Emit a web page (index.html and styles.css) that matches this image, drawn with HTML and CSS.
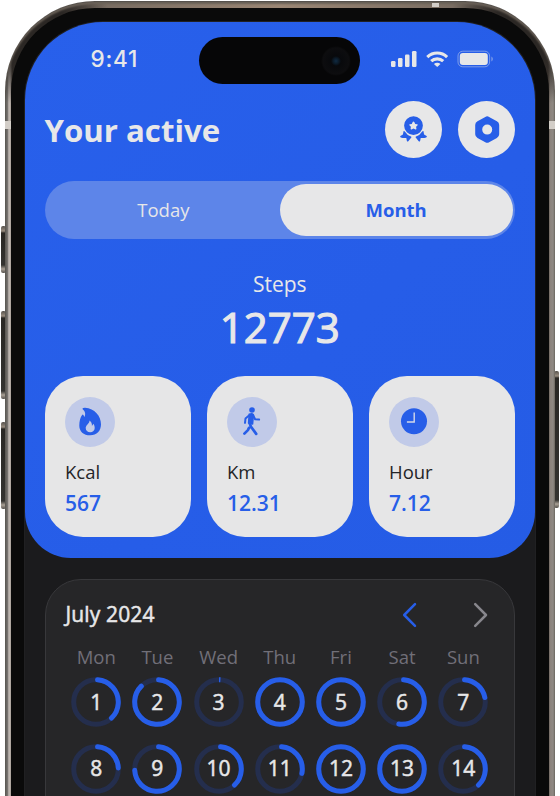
FILE: index.html
```html
<!DOCTYPE html>
<html lang="en">
<head>
<meta charset="utf-8">
<title>Your active</title>
<link rel="stylesheet" href="styles.css">
</head>
<body>
<div class="device">
  <span class="side-button side-action"></span>
  <span class="side-button side-up"></span>
  <span class="side-button side-down"></span>
  <span class="side-button side-power"></span>
  <div class="frame">
    <span class="band band-left"></span><span class="band band-right"></span><span class="band band-top"></span>
    <div class="bezel">
      <div class="screen">
        <div class="island"><span class="camera"></span></div>
        <main class="hero">
          <div class="status">
            <span class="clock">9:41</span>
            <svg class="status-icons" width="104" height="20" viewBox="0 0 104 20">
              <g fill="#e7e7e8">
                <rect x="1" y="12" width="4.5" height="6" rx="1.2"/><rect x="8" y="9" width="4.5" height="9" rx="1.2"/><rect x="15" y="5.5" width="4.5" height="12.5" rx="1.2"/><rect x="22" y="2" width="4.5" height="16" rx="1.2"/>
                <path d="M47.2 18.1l-3.3-3.2c1.8-1.6 4.8-1.6 6.6 0z"/>
                <rect x="69.8" y="4" width="28" height="12" rx="3"/>
                <path d="M101.4 7.5c1.9.8 1.9 4.2 0 5z" opacity=".45"/>
              </g>
              <path d="M37.3 8.1c5.5-5.4 14.3-5.4 19.8 0M41.2 12.2c3.3-3.1 8.7-3.1 12 0" fill="none" stroke="#e7e7e8" stroke-width="3.1"/>
              <rect x="68" y="2.2" width="31.6" height="15.6" rx="4.8" fill="none" stroke="#e7e7e8" opacity=".45"/>
            </svg>
          </div>
          <header class="title-row">
            <h1>Your active</h1>
            <button class="round-button" aria-label="Awards">
              <svg width="58" height="58" viewBox="0 0 58 58" fill="#275ee8">
                <path fill-rule="evenodd" d="M28.5 15.2a9.4 9.4 0 1 1 0 18.8a9.4 9.4 0 1 1 0-18.8zM28.5 20.6q-.6 0-.8.5l-.9 1.8-2 .3q-1 .3-.4 1.1l1.5 1.5-.3 2q0 1 .9.7l2-1 2 1q.9.3.9-.7l-.3-2 1.5-1.5q.6-.8-.4-1.1l-2-.3-.9-1.8q-.2-.5-.8-.5z"/>
                <path d="M18.6 30q.8-.3 1.2.5 2.4 3.9 6.2 4.9.8.4.3 1.2l-3 3.6q-.9.7-1.4-.3l-.6-2.8-3.7-.1-1.8-.6q-1.2-.5-.4-1.4l2.5-1.6zM38.4 30q-.8-.3-1.2.5-2.4 3.9-6.2 4.9-.8.4-.3 1.2l3 3.6q.9.7 1.4-.3l.6-2.8 3.7-.1 1.8-.6q1.2-.5.4-1.4l-2.5-1.6z"/>
              </svg>
            </button>
            <button class="round-button" aria-label="Settings">
              <svg width="58" height="58" viewBox="0 0 58 58" fill="#275ee8">
                <path fill-rule="evenodd" d="M27.3 15.9q1.9-1.1 3.8 0l7.8 4.3q2.3 1.3 2.3 3.7v9.4q0 2.4-2.3 3.7l-7.8 4.3q-1.9 1.1-3.8 0l-7.8-4.3q-2.3-1.3-2.3-3.7v-9.4q0-2.4 2.3-3.7zM29.2 23.6a5 5 0 1 0 0 10a5 5 0 1 0 0-10z"/>
              </svg>
            </button>
          </header>
          <div class="segments"><span class="segment">Today</span><span class="segment segment-active">Month</span></div>
          <section class="steps"><div class="steps-label">Steps</div><div class="steps-value">12773</div></section>
          <section class="cards">
            <article class="card">
              <svg class="card-icon" width="50" height="50" viewBox="0 0 50 50"><path fill="#275ee8" fill-rule="evenodd" d="M17.5 11.6q.5-1 2.6-.9C29.5 11.3 36 19 36 27.3c0 6.6-4.2 11-10.8 11-6.8 0-10.9-4-10.9-9.6 0-4.4 1-8.6 2.8-10.8q.8-.8 1.3.2l1.1 1.8c1.2-2.3.8-5-1-6.8q-1.2-.9-1-1.5zM24.4 23.4c.5 3-3.7 4.2-3.7 7.7 0 2.7 1.9 4.2 4.5 4.2s4.5-1.7 4.5-4.3c0-1.7-.6-3.2-1.5-4.2-.3 1-.7 1.7-1.3 1.9.3-2.1-.7-4.3-2.5-5.3z"/></svg>
              <div class="card-label">Kcal</div><div class="card-value">567</div>
            </article>
            <article class="card">
              <svg class="card-icon" width="50" height="50" viewBox="0 0 50 50" fill="none" stroke="#275ee8" stroke-linecap="round" stroke-linejoin="round"><circle cx="25" cy="13" r="2.8" fill="#275ee8" stroke="none"/><path d="M22.2 17.3q2.8-1.3 4.2.4L25.6 27l-4-1z" fill="#275ee8" stroke-width="1.5"/><path d="M22 18.5l-3.5 3-.5 4.3M26.3 18.5l1.8 3.8 4 .3" stroke-width="2"/><path d="M22.5 26l1.5 3.7 5.2 7.2M22 30.8l-1.1 2.3-3.5 3.5" stroke-width="2.7"/></svg>
              <div class="card-label">Km</div><div class="card-value">12.31</div>
            </article>
            <article class="card">
              <svg class="card-icon" width="50" height="50" viewBox="0 0 50 50"><circle cx="25" cy="24.3" r="13" fill="#275ee8"/><path d="M25.2 15.5V25h-7.3" fill="none" stroke="#d3d9e8" stroke-width="1.4"/></svg>
              <div class="card-label">Hour</div><div class="card-value">7.12</div>
            </article>
          </section>
        </main>
        <section class="calendar">
          <div class="calendar-head"><h2>July 2024</h2>
            <svg width="88" height="28" viewBox="0 0 88 28" fill="none" stroke-width="2.5" stroke-linecap="round" stroke-linejoin="round"><path d="M14 3.2L3.2 14 14 24.8" stroke="#275ee8"/><path d="M74.2 3.2L85 14 74.2 24.8" stroke="#88878d"/></svg>
          </div>
          <div class="weekdays"><span>Mon</span><span>Tue</span><span>Wed</span><span>Thu</span><span>Fri</span><span>Sat</span><span>Sun</span></div>
          <div class="days" id="days"></div>
        </section>
      </div>
    </div>
  </div>
</div>
<script src="calendar.js"></script>
</body>
</html>
```
FILE: styles.css
```css
* { box-sizing: border-box; }
body { margin: 0; width: 560px; height: 796px; overflow: hidden; background: #fff; font-family: "Open Sans", "Noto Sans", sans-serif; color: #e7e7e8; }
h1, h2 { margin: 0; }
.device { position: relative; height: 796px; padding: 1px 5px 0 4.5px; overflow: hidden; }
.frame { position: relative; height: 900px; padding: 7px 6px 0 6.5px; border-radius: 90px 90px 0 0; background: radial-gradient(circle at 25px 25px, #2b2724 35px, transparent 80px), radial-gradient(circle at 525px 25px, #2b2724 35px, transparent 80px), linear-gradient(90deg, #555351 0, #77736f 2.5px, #c6beb8 4px, #a79e97 6px, #332d28 7px, #776b61 90px, #9c8775 50%, #776b61 460px, #443b35 543px, #8b827b 545px, #8f8983 548px, #77736e 100%); box-shadow: inset 0 1px 1px #55504b, inset 0 3px 2px #6b6259; }
.band { position: absolute; background: #d3cec8; }
.band-left { left: 0; top: 120px; width: 6px; height: 8px; }
.band-right { right: 0; top: 120px; width: 6px; height: 8px; }
.band-top { left: 427px; top: 2px; width: 7px; height: 4px; }
.side-button { position: absolute; width: 5px; border-radius: 2px; background: linear-gradient(#55514c, #998d80 5px, #292724 7px, #343330 calc(100% - 8px), #aaa196 calc(100% - 4px), #55514c); }
.side-action { left: 1px; top: 226px; height: 47px; }
.side-up { left: 1px; top: 311px; height: 88px; }
.side-down { left: 1px; top: 422px; height: 87px; }
.side-power { right: 1px; top: 371px; height: 137px; }
.bezel { height: 100%; padding: 13.5px 14.5px 0 14px; border-radius: 84px 84px 0 0; background: #0a0a0a; }
.screen { position: relative; height: 100%; border-radius: 78px 78px 0 0; background: #1b1b1d; overflow: hidden; box-shadow: 0 0 0 1px #202022; }
.island { position: absolute; left: 174px; top: 15px; width: 161px; height: 47px; border-radius: 24px; background: #060607; }
.camera { position: absolute; right: 9px; top: 9px; width: 30px; height: 30px; border-radius: 50%; background: radial-gradient(circle, #102b43 0, #0b1926 3px, #08090c 5px, #0d0d0f 13px, #060607 15px); }
.hero { height: 536.5px; padding: 0 19.5px; border-radius: 0 0 46px 46px; background: linear-gradient(135deg, #2860eb, #265de8 60%, #255ce5); }
.status { display: flex; justify-content: space-between; align-items: center; height: 75px; padding: 0 21px 0 46px; }
.clock { font: 500 22.5px/28px Inter, sans-serif; letter-spacing: .8px; }
.title-row { display: flex; align-items: center; height: 66px; gap: 15.5px; }
.title-row h1 { flex: 1; font-size: 31.2px; line-height: 40px; font-weight: 700; padding-top: 1px; }
.round-button { flex: none; width: 57.5px; height: 57.5px; padding: 0; border: 0; border-radius: 50%; background: #e7e7e8; overflow: hidden; }
.round-button svg { display: block; }
.segments { display: flex; margin-top: 18.5px; height: 57.5px; padding: 2.5px; border-radius: 29px; background: #5d85e9; }
.segment { display: flex; flex: 1; align-items: center; justify-content: center; border-radius: 27px; font-size: 18.5px; padding-bottom: 1px; }
.segment-active { color: #275ee8; background: #e7e7e8; font-weight: 700; }
.steps { text-align: center; padding-top: 31.5px; height: 137.5px; }
.steps-label { font-size: 21px; line-height: 29px; }
.steps-value { font-size: 42px; line-height: 56px; font-weight: 400; -webkit-text-stroke: 1.2px currentColor; }
.cards { display: grid; grid-template-columns: repeat(3, 1fr); gap: 15.5px; }
.card { height: 161px; padding: 20.5px; border-radius: 38px; background: #e6e6e7; color: #242528; }
.card-icon { display: block; border-radius: 50%; background: #c1cae8; }
.card-label { margin-top: 12px; font-size: 18.5px; line-height: 26px; }
.card-value { margin-top: 4px; font-size: 21px; line-height: 29px; font-weight: 600; color: #275ee8; }
.calendar { margin: 21px 19.5px 0; height: 400px; padding: 18.5px 20px 0; border: 1px solid #38383b; border-radius: 36px 36px 0 0; background: #262628; }
.calendar-head { display: flex; justify-content: space-between; align-items: center; height: 32px; padding-right: 5px; }
.calendar-head h2 { font-size: 21px; font-weight: 400; letter-spacing: .15px; -webkit-text-stroke: .5px currentColor; padding-bottom: 1px; }
.weekdays, .days { display: grid; grid-template-columns: repeat(7, 61.2px); justify-content: center; justify-items: center; }
.weekdays { margin-top: 13px; line-height: 26px; font-size: 18.5px; color: #716f78; }
.days { margin-top: 7.5px; row-gap: 16.5px; }
.day { display: grid; place-items: center; width: 50px; height: 50px; font-size: 21px; line-height: 29px; font-weight: 400; -webkit-text-stroke: .5px currentColor; }
.day svg, .day span { grid-area: 1 / 1; }
.day svg { display: block; }
```
FILE: calendar.js
```javascript
// Share of the daily goal reached, drawn clockwise from the top of each ring.
const progress = [0.375, 0.87, 0.002, 1, 1, 0.52, 0.215, 0.24, 0.735, 0.375, 0.28, 1, 1, 0.375];
const circumference = 2 * Math.PI * 22.3;
document.getElementById('days').innerHTML = progress.map((share, i) => {
  const length = share * circumference;
  const cap = share > 0.01 && share < 1 ? 'round' : 'butt';
  const rotation = share > 0.01 && share < 1 ? -86 : -90;
  return `<div class="day"><svg width="50" height="50" viewBox="0 0 50 50" fill="none" stroke-width="5"><circle cx="25" cy="25" r="22.3" stroke="#242e4d"/><circle cx="25" cy="25" r="22.3" stroke="#275ee8" stroke-linecap="${cap}" stroke-dasharray="${Math.max(1.5, length - (cap === 'round' ? 1.5 : 0))} 200" transform="rotate(${rotation} 25 25)"/></svg><span>${i + 1}</span></div>`;
}).join('');
```
